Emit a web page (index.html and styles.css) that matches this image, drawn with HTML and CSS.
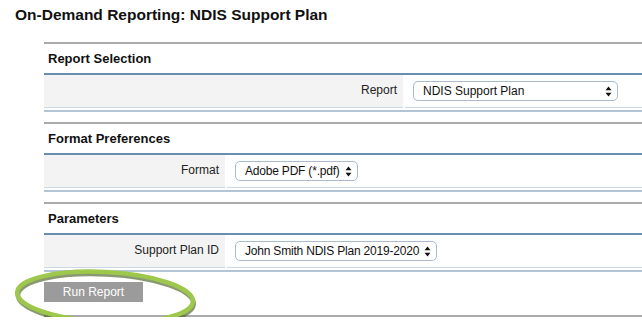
FILE: index.html
```html
<!DOCTYPE html>
<html lang="en">
<head>
    <meta charset="UTF-8">
    <meta name="viewport" content="width=device-width, initial-scale=1.0">
    <title>On-Demand Reporting</title>
    <link rel="stylesheet" href="styles.css">
</head>
<body>
    <h1 class="page-title">On-Demand Reporting: NDIS Support Plan</h1>
    <div class="report-form">
        <div class="panel">
            <h2 class="panel-title">Report Selection</h2>
            <div class="panel-body wide">
                <div class="field-label">Report</div>
                <div class="field-value">
                    <div class="select report-select">
                        <span>NDIS Support Plan</span>
                        <svg class="arrows" width="7" height="11" viewBox="0 0 7 11"><path d="M3.5 0.5 L6.5 4.3 L0.5 4.3 Z M3.5 10.5 L6.5 6.7 L0.5 6.7 Z" fill="#111"/></svg>
                    </div>
                </div>
            </div>
        </div>
        <div class="panel">
            <h2 class="panel-title">Format Preferences</h2>
            <div class="panel-body">
                <div class="field-label">Format</div>
                <div class="field-value">
                    <div class="select tight">
                        <span>Adobe PDF (*.pdf)</span>
                        <svg class="arrows" width="7" height="11" viewBox="0 0 7 11"><path d="M3.5 0.5 L6.5 4.3 L0.5 4.3 Z M3.5 10.5 L6.5 6.7 L0.5 6.7 Z" fill="#111"/></svg>
                    </div>
                </div>
            </div>
        </div>
        <div class="panel">
            <h2 class="panel-title">Parameters</h2>
            <div class="panel-body">
                <div class="field-label">Support Plan ID</div>
                <div class="field-value">
                    <div class="select tight">
                        <span>John Smith NDIS Plan 2019-2020</span>
                        <svg class="arrows" width="7" height="11" viewBox="0 0 7 11"><path d="M3.5 0.5 L6.5 4.3 L0.5 4.3 Z M3.5 10.5 L6.5 6.7 L0.5 6.7 Z" fill="#111"/></svg>
                    </div>
                </div>
            </div>
        </div>
        <div class="actions">
            <button class="run-btn">Run Report</button>
        </div>
    </div>
    <!-- green highlight drawn around the button -->
    <svg class="highlight" width="200" height="68" viewBox="0 0 200 68">
        <g transform="rotate(3 92 33)">
            <ellipse cx="93" cy="35.5" rx="88" ry="25" fill="none" stroke="#3d5516" stroke-opacity="0.6" stroke-width="4.5"/>
            <ellipse cx="92" cy="33" rx="88" ry="25" fill="none" stroke="#9dc84c" stroke-width="4.5"/>
        </g>
    </svg>
</body>
</html>
```

FILE: styles.css
```css
html, body {
    margin: 0;
    overflow: hidden;
}
body {
    font-family: "Liberation Sans", Arial, sans-serif;
    background-color: #ffffff;
    color: #111;
    position: relative;
}
.page-title {
    font-size: 15.5px;
    font-weight: bold;
    margin: 6px 0 0 15px;
    line-height: 18px;
}
.report-form {
    margin: 18px 0 0 44px;
}
.panel {
    border-top: 2px solid #aaaaaa;
    border-bottom: 2px solid #b3c5d4;
    margin-bottom: 10px;
}
.panel-title {
    font-size: 13px;
    font-weight: bold;
    margin: 0;
    height: 29px;
    line-height: 29px;
    padding-left: 4px;
    border-bottom: 2px solid #6a8db0;
}
.panel-body {
    display: grid;
    grid-template-columns: 181px 1fr;
    column-gap: 2px;
    padding-bottom: 2px;
}
.panel-body.wide {
    grid-template-columns: 359px 1fr;
}
.field-label,
.field-value {
    box-sizing: border-box;
    height: 33px;
    border-bottom: 1px solid #c9d8e4;
    display: flex;
    align-items: center;
    font-size: 12px;
}
.field-label {
    background-color: #f3f3f3;
    justify-content: flex-end;
    padding: 0 6px 3px 0;
    color: #222;
}
.field-value {
    padding-left: 8px;
}
.select {
    box-sizing: border-box;
    height: 20px;
    border: 1px solid #a8bccd;
    border-radius: 5px;
    background-color: #ffffff;
    display: flex;
    align-items: center;
    justify-content: space-between;
    gap: 5px;
    padding: 0 5px 0 9px;
    font-size: 12px;
    color: #111;
    white-space: nowrap;
}
.report-select {
    width: 205px;
}
.select.tight {
    letter-spacing: -0.2px;
}
.arrows {
    display: block;
    flex-shrink: 0;
}
.actions {
    border-bottom: 2px solid #aaaaaa;
    padding: 0 0 13px 0;
    margin-top: -10px;
}
.run-btn {
    margin-top: 10px;
    width: 99px;
    height: 20px;
    border: none;
    background-color: #9b9b9b;
    color: #ffffff;
    font-family: "Liberation Sans", Arial, sans-serif;
    font-size: 12px;
    padding: 0;
}
.highlight {
    position: absolute;
    left: 13px;
    top: 264px;
}
```
